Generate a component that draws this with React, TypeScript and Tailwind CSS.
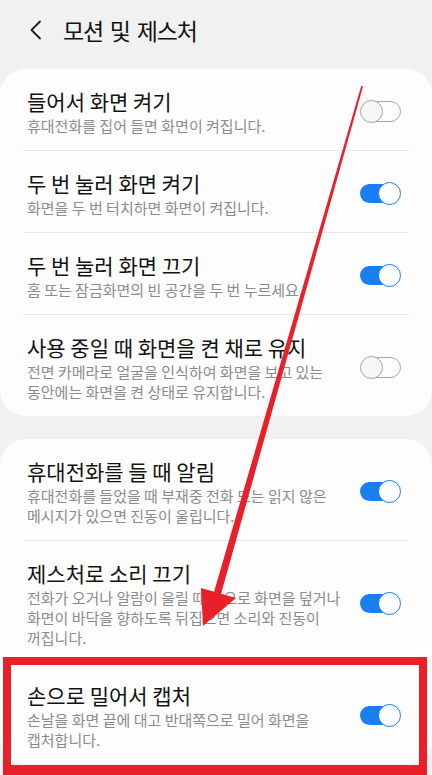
import React from "react";

type Item = { title: string; desc: string[]; on: boolean };

const card1: Item[] = [
  { title: "들어서 화면 켜기", desc: ["휴대전화를 집어 들면 화면이 켜집니다."], on: false },
  { title: "두 번 눌러 화면 켜기", desc: ["화면을 두 번 터치하면 화면이 켜집니다."], on: true },
  { title: "두 번 눌러 화면 끄기", desc: ["홈 또는 잠금화면의 빈 공간을 두 번 누르세요."], on: true },
  {
    title: "사용 중일 때 화면을 켠 채로 유지",
    desc: ["전면 카메라로 얼굴을 인식하여 화면을 보고 있는", "동안에는 화면을 켠 상태로 유지합니다."],
    on: false,
  },
];

const card2: Item[] = [
  {
    title: "휴대전화를 들 때 알림",
    desc: ["휴대전화를 들었을 때 부재중 전화 또는 읽지 않은", "메시지가 있으면 진동이 울립니다."],
    on: true,
  },
  {
    title: "제스처로 소리 끄기",
    desc: ["전화가 오거나 알람이 울릴 때 손으로 화면을 덮거나", "화면이 바닥을 향하도록 뒤집으면 소리와 진동이", "꺼집니다."],
    on: true,
  },
  {
    title: "손으로 밀어서 캡처",
    desc: ["손날을 화면 끝에 대고 반대쪽으로 밀어 화면을", "캡처합니다."],
    on: true,
  },
];

function Toggle({ on }: { on: boolean }) {
  if (on) {
    return (
      <div className="relative w-[41px] h-[23px] shrink-0">
        <div className="absolute left-0 right-[2px] top-[2px] h-[19px] rounded-full bg-[#1a7ef3]" />
        <div className="absolute right-0 top-0 w-[23px] h-[23px] rounded-full bg-white border-[1.5px] border-[#1a7ef3]" />
      </div>
    );
  }
  return (
    <div className="relative w-[41px] h-[23px] shrink-0">
      <div className="absolute left-[1px] right-0 top-[1px] h-[21px] rounded-full border-[1.5px] border-[#a3a3a3]" />
      <div className="absolute left-0 top-0 w-[23px] h-[23px] rounded-full bg-[#f7f7f7] border-[1.5px] border-[#a3a3a3]" />
    </div>
  );
}

function Row({ item, first }: { item: Item; first: boolean }) {
  return (
    <div className={first ? "" : "border-t border-[#e6e6e6] mx-[23px]"}>
      <div className={`flex items-center pt-[18px] pb-[14px] pr-[31px] ${first ? "pl-[27px]" : "-mx-[23px] pl-[27px] pr-[31px]"}`}>
        <div className="flex-1 min-w-0">
          <div className="text-[21px] leading-[28px] text-[#121212] whitespace-nowrap">{item.title}</div>
          <div className="mt-px text-[15px] leading-[20px] text-[#8b8b8b]">
            {item.desc.map((d, i) => (
              <div key={i} className="whitespace-nowrap">{d}</div>
            ))}
          </div>
        </div>
        <Toggle on={item.on} />
      </div>
    </div>
  );
}

function Card({ items }: { items: Item[] }) {
  return (
    <div className="bg-[#fdfdfd] rounded-[26px]">
      {items.map((it, i) => (
        <Row key={i} item={it} first={i === 0} />
      ))}
    </div>
  );
}

export default function App() {
  return (
    <div
      className="relative w-[432px] h-[775px] overflow-hidden bg-[#f1f1f1]"
      style={{ fontFamily: '"Noto Sans CJK KR", "Noto Sans", sans-serif' }}
    >
      <div className="flex items-center h-[58px] pt-[2px]">
        <svg width="14" height="20" viewBox="0 0 14 20" className="ml-[29px]">
          <path d="M11 1.5 L2.5 10 L11 18.5" fill="none" stroke="#1c1c1c" strokeWidth="1.8" strokeLinecap="round" strokeLinejoin="round" />
        </svg>
        <div className="ml-[20px] text-[23px] leading-[32px] tracking-[-1.2px] [word-spacing:3px] text-[#141414]">모션 및 제스처</div>
      </div>
      <div className="mt-[11px] flex flex-col gap-[23px]">
        <Card items={card1} />
        <Card items={card2} />
      </div>

      <div className="absolute left-[3px] top-[657px] right-[5px] bottom-0 border-[8px] border-b-[10px] border-[#e8202a]" />

      <svg className="absolute inset-0 pointer-events-none" width="432" height="775" viewBox="0 0 432 775">
        <polygon points="361.2,86 363,86.5 221,594 214,592" fill="#e8202a" />
        <polygon points="201,588 236,598 203,626" fill="#e8202a" />
      </svg>
    </div>
  );
}
